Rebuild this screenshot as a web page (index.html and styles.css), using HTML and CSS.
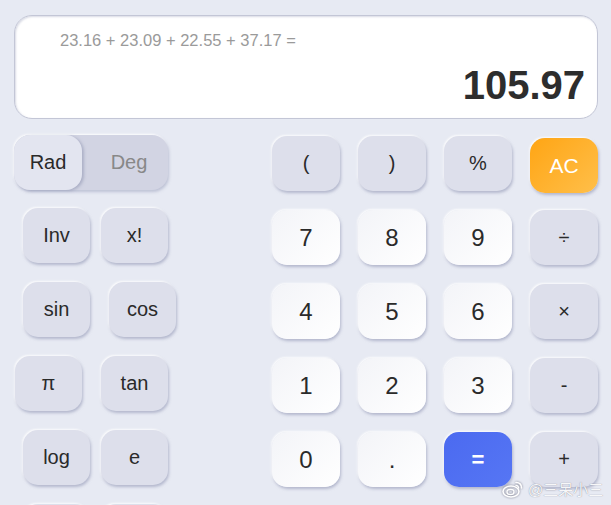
FILE: index.html
```html
<!DOCTYPE html>
<html lang="zh">
  <head>
    <meta charset="UTF-8" />
    <meta name="viewport" content="width=device-width, initial-scale=1.0" />
    <title>Calculator</title>
    <link rel="stylesheet" href="styles.css">
  </head>
  <body>
    <div class="calculator">
      <div class="display">
        <div class="expression">23.16 + 23.09 + 22.55 + 37.17 =</div>
        <div class="result">105.97</div>
      </div>

      <div class="keypad">
        <div class="scientific">
          <div class="toggle">
            <span class="toggle-option active">Rad</span>
            <span class="toggle-option">Deg</span>
          </div>
          <div class="sci-grid">
            <button class="key">Inv</button>
            <button class="key">x!</button>
            <button class="key">sin</button>
            <button class="key nudge-right">cos</button>
            <button class="key nudge-left">π</button>
            <button class="key">tan</button>
            <button class="key">log</button>
            <button class="key">e</button>
            <button class="key"></button>
            <button class="key"></button>
          </div>
        </div>

        <div class="basic">
          <button class="key">(</button>
          <button class="key">)</button>
          <button class="key">%</button>
          <button class="key clear">AC</button>

          <button class="key num">7</button>
          <button class="key num">8</button>
          <button class="key num">9</button>
          <button class="key op">÷</button>

          <button class="key num">4</button>
          <button class="key num">5</button>
          <button class="key num">6</button>
          <button class="key op">×</button>

          <button class="key num">1</button>
          <button class="key num">2</button>
          <button class="key num">3</button>
          <button class="key op">-</button>

          <button class="key num">0</button>
          <button class="key num">.</button>
          <button class="key equals">=</button>
          <button class="key op">+</button>
        </div>
      </div>
    </div>

    <div class="watermark">
      <svg width="22" height="18" viewBox="0 0 22 18">
        <ellipse cx="9" cy="11.5" rx="8" ry="5.5" fill="none" stroke="#fff" stroke-width="1.6"/>
        <ellipse cx="8.5" cy="12" rx="3.5" ry="2.6" fill="none" stroke="#fff" stroke-width="1.4"/>
        <path d="M14 2.5 a5 5 0 0 1 5.5 5.5" fill="none" stroke="#fff" stroke-width="1.6" stroke-linecap="round"/>
        <path d="M14 5.5 a2.4 2.4 0 0 1 2.6 2.6" fill="none" stroke="#fff" stroke-width="1.4" stroke-linecap="round"/>
      </svg>
      <span>@三呆小三</span>
    </div>
  </body>
</html>
```

FILE: styles.css
```css
body {
  margin: 0;
  background: #e7eaf3;
  font-family: "Liberation Sans", Arial, "Noto Sans CJK SC", sans-serif;
  color: #2a2a2a;
  height: 505px;
  overflow: hidden;
}

.calculator {
  padding: 15px 13px 0 14px;
}

/* Display */
.display {
  height: 102px;
  background: #fff;
  border: 1px solid #c3c6d6;
  border-radius: 18px;
  box-shadow: inset 1px 1px 2px rgba(160, 165, 190, 0.4);
  padding: 0 12px 0 45px;
  display: flex;
  flex-direction: column;
  justify-content: space-between;
}

.expression {
  margin-top: 15px;
  font-size: 16.5px;
  color: #9a9a9a;
}

.result {
  text-align: right;
  font-size: 40px;
  font-weight: bold;
  color: #2d2d2d;
  margin-bottom: 10px;
}

/* Keypad */
.keypad {
  display: flex;
  margin-top: 16px;
}

.scientific {
  width: 154px;
}

.toggle {
  display: flex;
  height: 55px;
  background: #d2d4e3;
  border-radius: 16px;
  box-shadow: 1px 2px 3px rgba(150, 155, 185, 0.5), -1px -1px 2px #fff;
  font-size: 20px;
}

.toggle-option {
  flex: 1;
  display: flex;
  align-items: center;
  justify-content: center;
  color: #888;
  padding-left: 8px;
}

.toggle-option.active {
  flex: 0 0 68px;
  padding-left: 0;
  background: #e3e5f0;
  color: #2a2a2a;
  border-radius: 16px;
  box-shadow: 2px 1px 3px rgba(140, 145, 175, 0.55);
}

.sci-grid {
  display: grid;
  grid-template-columns: 67px 67px;
  grid-auto-rows: 55px;
  column-gap: 11px;
  row-gap: 19px;
  padding-left: 9px;
  margin-top: 18px;
}

.nudge-right {
  margin-left: 8px;
  margin-right: -8px;
}

.nudge-left {
  margin-left: -8px;
  margin-right: 8px;
}

.basic {
  display: grid;
  grid-template-columns: repeat(4, 68px);
  grid-auto-rows: 55px;
  column-gap: 18px;
  row-gap: 19px;
  margin-left: 104px;
  margin-top: 1px;
}

.key {
  border: none;
  border-radius: 15px;
  background: #dddfeb;
  color: #2a2a2a;
  font-family: inherit;
  font-size: 20px;
  padding: 0;
  box-shadow: 1px 2px 3px rgba(145, 150, 180, 0.6), -1px -1px 2px rgba(255, 255, 255, 0.9);
}

.num {
  background: linear-gradient(135deg, #f3f4f8 0%, #ffffff 100%);
  font-size: 24px;
}

.op {
  font-size: 20px;
}

.clear {
  background: linear-gradient(135deg, #ffa514 0%, #ffbf4a 100%);
  color: #fff;
  font-size: 21px;
  margin-top: 2px;
  margin-bottom: -2px;
}

.equals {
  background: linear-gradient(135deg, #4b6af0 0%, #5676f4 100%);
  color: #fff;
  font-size: 22px;
  font-weight: bold;
}

/* Watermark overlay */
.watermark {
  position: absolute;
  left: 502px;
  top: 478px;
  display: flex;
  align-items: center;
  gap: 4px;
  font-size: 15px;
  color: rgba(255, 255, 255, 0.95);
  text-shadow: 0 0 1px rgba(90, 90, 110, 0.8);
}

.watermark svg {
  filter: drop-shadow(0 0 1px rgba(90, 90, 110, 0.8));
}
```
